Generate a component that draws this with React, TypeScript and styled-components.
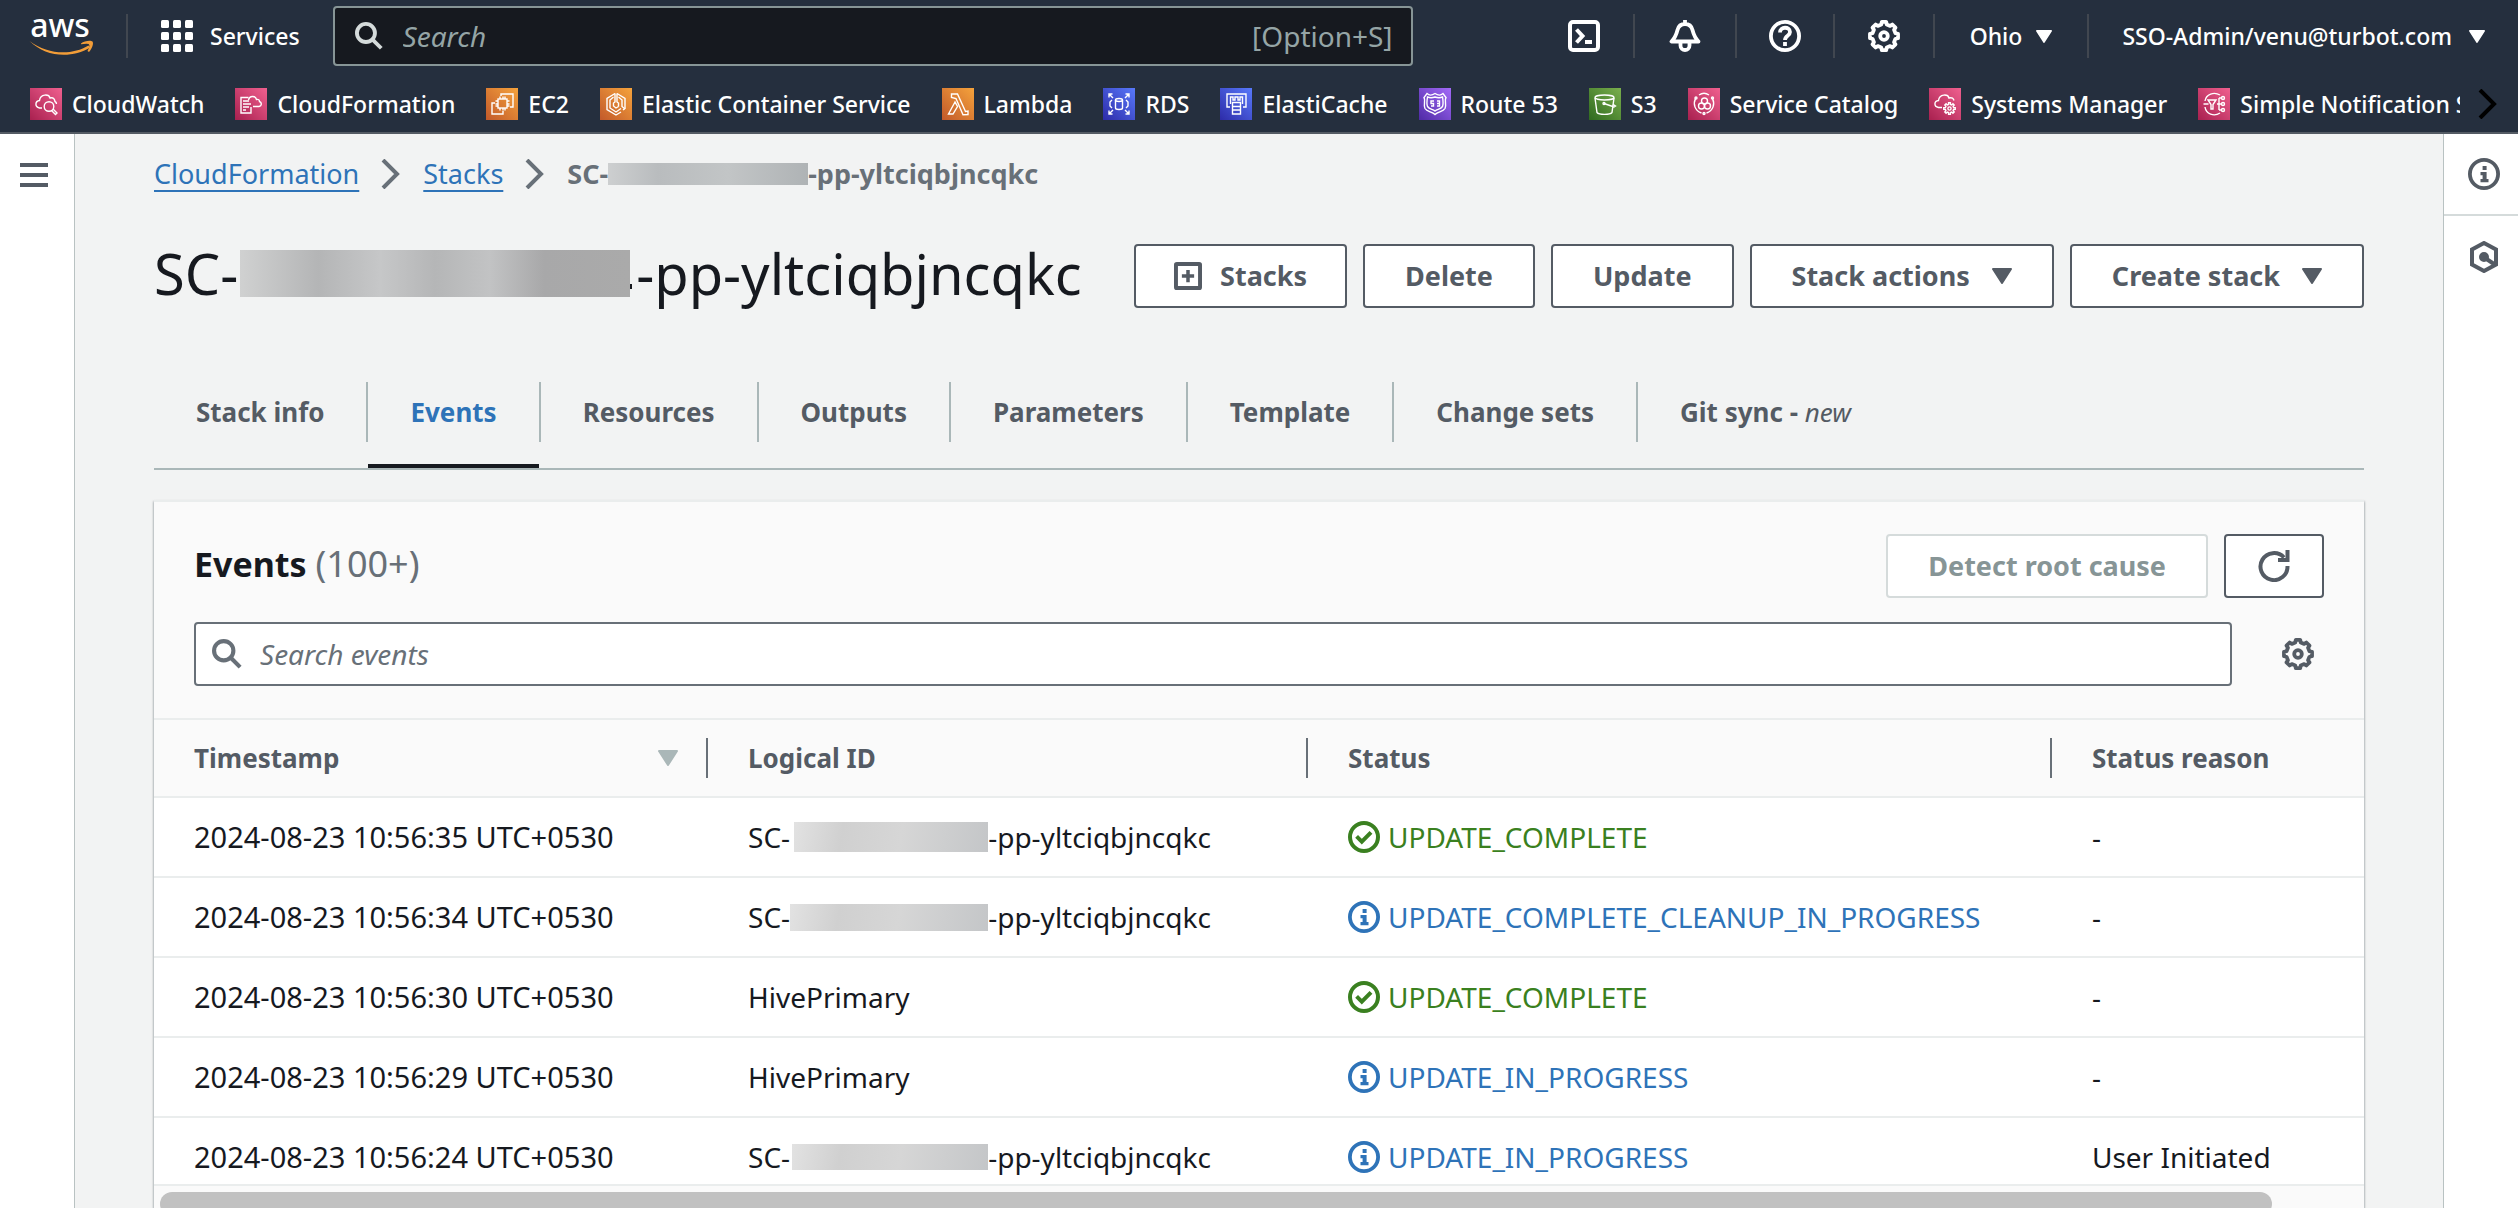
import React from "react";
import styled, { createGlobalStyle, css } from "styled-components";

const GlobalStyle = createGlobalStyle`
  *, *::before, *::after { box-sizing: border-box; }
  html, body { margin: 0; height: 100%; }
  body {
    background: #f2f3f3;
    color: #16191f;
    font-family: "Noto Sans", "Open Sans", sans-serif;
    font-size: 28px;
    line-height: 40px;
    overflow: hidden;
  }
  button, input { font: inherit; margin: 0; }
  button { cursor: pointer; }
  svg { display: block; flex: none; }
`;

/* ---------- Page frame ---------- */

const Page = styled.div`
  display: flex;
  flex-direction: column;
  height: 100vh;
`;

const Body = styled.div`
  display: flex;
  flex: 1;
  min-height: 0;
`;

const Rail = styled.nav<{ $side: "left" | "right" }>`
  flex: none;
  display: flex;
  flex-direction: column;
  width: 75px;
  background: #fff;
  ${(p) => (p.$side === "left" ? "border-right" : "border-left")}: 1px solid #b9c2c2;
`;

const RailButton = styled.button<{ $divided?: boolean; $inset: number }>`
  display: flex;
  align-items: center;
  height: 82px;
  padding: 0 0 0 ${(p) => p.$inset}px;
  border: 0;
  background: none;
  color: #545b64;
  ${(p) => p.$divided && css`border-bottom: 2px solid #d5dbdb;`}
`;

const Main = styled.main`
  flex: 1;
  min-width: 0;
  display: flex;
  flex-direction: column;
  padding: 20px 79px 0;
`;

/* ---------- Global header ---------- */

const Header = styled.header`
  flex: none;
  background: #252f3e;
  border-bottom: 2px solid #545b64;
  color: #fff;
  font-size: 23px;
  font-weight: 500;
  line-height: 32px;
`;

const TopRow = styled.div`
  display: flex;
  align-items: center;
  height: 72px;
`;

const Rule = styled.span`
  flex: none;
  width: 2px;
  height: 44px;
  background: #414750;
`;

const LogoLink = styled.a`
  flex: none;
  width: 126px;
  padding-left: 28px;
`;

const BarButton = styled.button<{ $pad: number; $gap?: number }>`
  flex: none;
  display: flex;
  align-items: center;
  gap: ${(p) => p.$gap ?? 14}px;
  padding: 0 ${(p) => p.$pad}px;
  border: 0;
  background: none;
  color: #fff;
  white-space: nowrap;
`;

const GlobalSearch = styled.label`
  display: flex;
  align-items: center;
  gap: 20px;
  flex: 0 1 1080px;
  height: 60px;
  padding: 0 18px 0 20px;
  border: 2px solid #879596;
  border-radius: 4px;
  background: #16191f;
  color: #95a5a6;
  font-size: 28px;
  font-weight: 400;
  svg { color: #d5dbdb; }
`;

const BareInput = styled.input`
  flex: 1;
  min-width: 0;
  height: 100%;
  padding: 0;
  border: 0;
  outline: 0;
  background: none;
  color: inherit;
  &::placeholder { color: inherit; font-style: italic; opacity: 1; }
`;

const TopRight = styled.div`
  display: flex;
  align-items: center;
  margin-left: auto;
`;

const FavoriteBar = styled.div`
  display: flex;
  align-items: center;
  height: 60px;
  padding: 4px 20px 0 30px;
  gap: 18px;
`;

const FavoriteList = styled.ul`
  display: flex;
  flex: 1;
  min-width: 0;
  gap: 31px;
  margin: 0;
  padding: 0;
  overflow: hidden;
  list-style: none;
`;

const FavoriteLink = styled.a`
  display: flex;
  align-items: center;
  gap: 10px;
  color: #fff;
  text-decoration: none;
  white-space: nowrap;
`;

const Tile = styled.span<{ $from: string; $to: string }>`
  flex: none;
  width: 32px;
  height: 32px;
  background: linear-gradient(45deg, ${(p) => p.$from}, ${(p) => p.$to});
  color: #fff;
`;

const ScrollButton = styled.button`
  flex: none;
  padding: 0;
  border: 0;
  background: none;
  color: #000;
`;

/* ---------- Stack heading ---------- */

const Crumbs = styled.ol`
  display: flex;
  align-items: center;
  gap: 22px;
  margin: 0;
  padding: 0;
  list-style: none;
  color: #687078;
  font-size: 27px;
`;

const Crumb = styled.li<{ $current?: boolean }>`
  display: flex;
  align-items: center;
  gap: 22px;
  font-weight: ${(p) => (p.$current ? 700 : 400)};
`;

const CrumbLink = styled.a`
  color: #2e73b8;
  text-decoration: underline;
  text-decoration-thickness: 2px;
  text-underline-offset: 6px;
  text-decoration-skip-ink: none;
`;

const Masked = styled.span`
  display: inline-flex;
  align-items: center;
  white-space: nowrap;
`;

const Mask = styled.span<{ $w: number; $h: number; $lead: number; $tone: "light" | "mid" | "dark" }>`
  flex: none;
  width: ${(p) => p.$w}px;
  height: ${(p) => p.$h}px;
  margin-left: ${(p) => p.$lead}px;
  background: ${(p) =>
    p.$tone === "light"
      ? "linear-gradient(100deg, #e2e2e2, #d0d0d0 25%, #d6d6d6 55%, #c4c6c8)"
      : p.$tone === "mid"
        ? "linear-gradient(90deg, #cdcfd0, #b9bcbe 25%, #c2c5c6 60%, #afb3b5)"
        : "linear-gradient(90deg, #d0d1d1, #b4b5b6 20%, #c6c7c8 36%, #b5b6b7 50%, #c2c3c4 64%, #a8a8a9 78%, #aaa)"};
`;

/* The foot of the last hidden letter, which shows past the mask. */
const Peek = styled.span`
  align-self: flex-end;
  width: 2px;
  height: 5px;
  margin: 0 4px 13px 0;
  background: #16191f;
`;

const TitleRow = styled.div`
  display: flex;
  align-items: center;
  justify-content: space-between;
  margin-top: 50px;
`;

const Title = styled.h1`
  margin: 0;
  padding-bottom: 6px;
  font-size: 56px;
  font-weight: 400;
  line-height: 58px;
`;

const Actions = styled.div`
  display: flex;
  gap: 16px;
`;

const Button = styled.button<{ $pad?: number; $gap?: number }>`
  display: flex;
  align-items: center;
  gap: ${(p) => p.$gap ?? 22}px;
  height: 64px;
  padding: 0 ${(p) => p.$pad ?? 40}px;
  border: 2px solid #545b64;
  border-radius: 4px;
  background: #fff;
  color: #545b64;
  font-size: 27px;
  font-weight: 700;
  white-space: nowrap;
  &:disabled { border-color: #d5dbdb; color: #879596; }
`;

const TabList = styled.div`
  display: flex;
  margin-top: 74px;
  border-bottom: 2px solid #aab7b8;
`;

const Tab = styled.button<{ $active?: boolean }>`
  height: 86px;
  padding: 0 42px 22px;
  border: 0;
  border-bottom: 4px solid ${(p) => (p.$active ? "#16191f" : "transparent")};
  background: none;
  color: ${(p) => (p.$active ? "#2e73b8" : "#545b64")};
  font-size: 26px;
  font-weight: 700;
  white-space: nowrap;
  em { font-weight: 400; }
`;

const TabRule = styled.span`
  width: 2px;
  height: 60px;
  background: #aab7b8;
`;

/* ---------- Events card ---------- */

const Card = styled.section`
  flex: 1;
  min-height: 0;
  display: flex;
  flex-direction: column;
  margin-top: 30px;
  border-top: 2px solid #eaeded;
  background: #fafafa;
  box-shadow: 0 2px 2px rgba(0, 28, 36, 0.3), 1px 1px 2px rgba(0, 28, 36, 0.15), -1px 1px 2px rgba(0, 28, 36, 0.15);
`;

const CardHead = styled.div`
  display: flex;
  align-items: center;
  gap: 16px;
  padding: 32px 40px 24px;
`;

const CardTitle = styled.h2`
  flex: 1;
  margin: 0;
  padding-bottom: 4px;
  font-size: 34px;
  font-weight: 700;
  line-height: 44px;
  span { color: #687078; font-size: 36px; font-weight: 400; }
`;

const FilterRow = styled.div`
  display: flex;
  align-items: center;
  gap: 50px;
  padding: 0 50px 32px 40px;
`;

const EventSearch = styled.label`
  display: flex;
  flex: 1;
  align-items: center;
  gap: 18px;
  height: 64px;
  padding: 0 16px;
  border: 2px solid #687078;
  border-radius: 4px;
  background: #fff;
  color: #687078;
`;

const IconButton = styled.button`
  flex: none;
  padding: 0;
  border: 0;
  background: none;
  color: #545b64;
`;

const TableView = styled.div`
  flex: 1;
  min-height: 0;
  overflow: hidden;
  background: #fff;
  border-bottom: 2px solid #eaeded;
`;

const Table = styled.table`
  width: 100%;
  table-layout: fixed;
  border-collapse: separate;
  border-spacing: 0;
  text-align: left;
`;

const HeadCell = styled.th`
  height: 80px;
  padding: 0;
  border-top: 2px solid #eaeded;
  border-bottom: 2px solid #eaeded;
  background: #fafafa;
  color: #545b64;
  font-size: 26px;
  font-weight: 700;
`;

const HeadInner = styled.div<{ $last?: boolean }>`
  display: flex;
  align-items: center;
  justify-content: space-between;
  height: 40px;
  padding: 0 28px 0 40px;
  border-right: ${(p) => (p.$last ? "0" : "2px solid #687078")};
`;

const Cell = styled.td<{ $stamp?: boolean }>`
  height: 80px;
  padding: 0 0 0 40px;
  border-bottom: 2px solid #eaeded;
  font-size: ${(p) => (p.$stamp ? 29 : 28)}px;
  white-space: nowrap;
`;

const Status = styled.span<{ $done: boolean }>`
  display: flex;
  align-items: center;
  gap: 8px;
  color: ${(p) => (p.$done ? "#3a8020" : "#2e73b8")};
`;

const ScrollTrack = styled.div`
  flex: none;
  height: 22px;
  padding: 6px 92px 0 6px;
  overflow: hidden;
`;

const ScrollThumb = styled.div`
  height: 24px;
  border-radius: 12px;
  background: #c1c1c1;
`;

/* ---------- Icons ---------- */

const Svg = ({ size = 32, children, w = 3 }: { size?: number; w?: number; children: React.ReactNode }) => (
  <svg width={size} height={size} viewBox="0 0 32 32" fill="none" stroke="currentColor" strokeWidth={w} aria-hidden="true">
    {children}
  </svg>
);

const gearPath = (cx: number, cy: number, outer: number, inner: number, teeth = 8) => {
  const pts: string[] = [];
  const step = (Math.PI * 2) / teeth;
  for (let i = 0; i < teeth; i++) {
    const a = i * step - Math.PI / 2;
    [
      [-0.3, inner],
      [-0.2, outer],
      [0.2, outer],
      [0.3, inner],
    ].forEach(([o, r]) => {
      pts.push(`${(cx + Math.cos(a + o * step) * r).toFixed(2)} ${(cy + Math.sin(a + o * step) * r).toFixed(2)}`);
    });
  }
  return `M${pts.join("L")}Z`;
};

const GearIcon = () => (
  <Svg w={3.8}>
    <path d={gearPath(16, 16, 14.2, 11.8)} strokeLinejoin="round" />
    <circle cx="16" cy="16" r="3.8" />
  </Svg>
);

const SearchIcon = ({ size = 28 }: { size?: number }) => (
  <Svg size={size} w={4.4}>
    <circle cx="12.5" cy="12.5" r="10.3" />
    <path d="M19.5 19.5l10.500 10.500" />
  </Svg>
);

const Caret = ({ w = 20, h = 16, color = "currentColor" }: { w?: number; h?: number; color?: string }) => (
  <svg width={w} height={h} viewBox="0 0 20 16" aria-hidden="true">
    <path d="M1 1h18l-9 14z" fill={color} stroke={color} strokeWidth="2" strokeLinejoin="round" />
  </svg>
);

const Chevron = ({ w = 20, h = 30 }: { w?: number; h?: number }) => (
  <svg width={w} height={h} viewBox="0 0 20 30" fill="none" stroke="currentColor" strokeWidth="4" aria-hidden="true">
    <path d="M2 1l14 14L2 29" />
  </svg>
);

const InfoIcon = () => (
  <Svg w={3.8}>
    <circle cx="16" cy="16" r="14.1" />
    <path d="M14.6 8h4v4h-4zM12.500 14h6.100v7H20.500v3.200h-8v-3.200h2.100v-3.800h-2.100z" fill="currentColor" stroke="none" />
  </Svg>
);

const DoneIcon = () => (
  <Svg w={4}>
    <circle cx="16" cy="16" r="14" />
    <path d="M8.6 15.4l5.2 5.2 9.2-9.2" />
  </Svg>
);

const AwsLogo = () => (
  <svg width="68" height="72" viewBox="0 0 68 72" aria-label="aws">
    <text x="32" y="37" textAnchor="middle" fill="#fff" fontFamily="Noto Sans, sans-serif" fontSize="32" fontWeight="500">
      aws
    </text>
    <g transform="translate(0 13)" fill="#f29d38">
      <path d="M1.500 28C20 42 44 42.500 60.500 32.500l1.500 2C44 45.500 18 44.500 1.500 28z" />
      <path d="M53 30.500c3-2.500 9.500-3.500 11.500-2 1.500 2-.5 7-3.500 10.500l-1.500-1c1.500-2.500 2.500-5.500 1.500-6.500-1-1-4.500-.6-8-.2z" />
    </g>
  </svg>
);

const pink = ["#a8204f", "#f0608f"];
const orange = ["#c2592a", "#f5a33c"];
const blue = ["#2d2ba8", "#5879fb"];
const purple = ["#4f2aa5", "#a36af8"];
const green = ["#2f6a1f", "#7aaf4d"];

const favorites: { name: string; tone: string[]; glyph: React.ReactNode }[] = [
  {
    name: "CloudWatch",
    tone: pink,
    glyph: (
      <>
        <path d="M12 20H9.500c-5-1-4.500-7 0-7.500 1-7 9.500-6.500 10.500-2.500 3.500-1 4.500 1 5 3.500 1 .5 1.500 1.500 1.500 2.500" />
        <circle cx="19" cy="18.500" r="4.800" />
        <path d="M21.500 22.500l4 4 1.500-1.500-4-4" />
      </>
    ),
  },
  {
    name: "CloudFormation",
    tone: pink,
    glyph: (
      <>
        <path d="M13.500 9.500H6v15.500h10V19M8 13h6M8 16h8M8 19h6M8 22h3" />
        <path d="M13.500 12c1-4.500 7-4.500 8-.5 2-.5 3 .5 3 2 2.500 1 2.500 4.500-.5 5h-6" />
      </>
    ),
  },
  {
    name: "EC2",
    tone: orange,
    glyph: (
      <>
        <rect x="12" y="11" width="9" height="9" />
        <path d="M14 8.500V11m3-2.500V11m2-2.500V11M14 20v2.500m3-2.500v2.500m2-2.500v2.500M9.500 13H12m-2.500 3H12m-2.500 2H12m9-5h2.500M21 16h2.500M21 18h2.500" />
        <path d="M15 8V6h12v13h-3M9 15H6v11h11v-3" />
      </>
    ),
  },
  {
    name: "Elastic Container Service",
    tone: orange,
    glyph: (
      <>
        <path d="M15 5.500l-8 5v11l9 5.500 5-3M17 5.500l8 5v10l-2 1.500" />
        <path d="M13.500 9l-3.500 3v8l6 4 5-3.500M18.500 9l3.500 3v6.500l3 2.500M15 5.500V14l-1.500 1v3l2.500 2 2.500-1.500M17 5.500V14l1.500 1v3.500" />
      </>
    ),
  },
  {
    name: "Lambda",
    tone: orange,
    glyph: <path d="M9.500 6h6l8 17.500 2.500-.5v3.500l-5 .3L14 10.500 9.500 9.500zM13 14L6.500 26H11l4.500-7.500z" />,
  },
  {
    name: "RDS",
    tone: blue,
    glyph: (
      <>
        <ellipse cx="16" cy="12" rx="3.500" ry="1.500" />
        <path d="M12.500 12v8c0 2 7 2 7 0v-8M6 9.500V6h3.500M6 6l4 4M22.500 6H26v3.500M26 6l-4 4M6 22.500V26h3.500M6 26l4-4M22.500 26H26v-3.500M26 26l-4-4M9 12l-2 2v4l2 2M23 12l2 2v4l-2 2" />
      </>
    ),
  },
  {
    name: "ElastiCache",
    tone: blue,
    glyph: (
      <>
        <path d="M10 19H7V6h19v13h-3" />
        <path d="M10.500 16V9h2.500v3h2V9h3v3h2V9h2.500v7" />
        <path d="M12.500 14.500h8V26h-8zM12.500 18.500h8M12.500 22h8" />
      </>
    ),
  },
  {
    name: "Route 53",
    tone: purple,
    glyph: (
      <>
        <path d="M16 5.500c-3 2-6 2-8 0l-3 4c2 3-1 7 1 11 2 3.500 7 3 10 6 3-3 8-2.500 10-6 2-4-1-8 1-11l-3-4c-2 2-5 2-8 0z" />
        <path d="M16 9c-3 1-5 1-7.500 0-.5 3-1 7 0 9.500 2 3 5 2.500 7.500 4.500 2.500-2 5.500-1.500 7.500-4.500 1-2.500.5-6.500 0-9.500-2.500 1-4.500 1-7.500 0z" />
        <path d="M15 13h-3v2.500h2.500V18H12M18 13h2.500v5H18m0-2.500h2.500" />
      </>
    ),
  },
  {
    name: "S3",
    tone: green,
    glyph: (
      <>
        <ellipse cx="15.500" cy="9.500" rx="9.500" ry="2.500" />
        <path d="M6 10l2 14.500c2 2.500 13 2.500 15 0L25 10M15 15.500l10 3.500 1.500-1-3-2" />
        <circle cx="15" cy="15.500" r="1" />
      </>
    ),
  },
  {
    name: "Service Catalog",
    tone: pink,
    glyph: (
      <>
        <path d="M7.500 10.500c-2.500 5.500-1 12 6 14.500M24.500 10.500c2.500 5.500 1 12-6 14.500M11 7c3-2 7-2 10 0" />
        <circle cx="16.500" cy="13" r="3" />
        <circle cx="13.500" cy="18" r="3" />
        <circle cx="19.500" cy="18" r="3" />
        <circle cx="8" cy="10" r="1" />
        <circle cx="24.500" cy="10" r="1" />
        <circle cx="16" cy="25.500" r="1" />
      </>
    ),
  },
  {
    name: "Systems Manager",
    tone: pink,
    glyph: (
      <>
        <path d="M13 19.500H9.500c-5-1-4.500-6.500 0-7 1-7 9.500-6.500 10.500-2.500 3-1 4.500 .5 5 2.500" />
        <path d={gearPath(20.5, 20.5, 5.8, 4.2)} />
        <circle cx="20.500" cy="20.500" r="1.600" />
      </>
    ),
  },
  {
    name: "Simple Notification Service",
    tone: pink,
    glyph: (
      <>
        <path d="M22 7c-6-3.500-14-1-15 6M7 19c1 7 9 10 15 6M5.500 16h5" />
        <path d="M10 12h8l-3 4.500V21h-2v-4.500zM19 16h5M21 10v12M21 10h3M21 22h3" />
        <circle cx="25" cy="10" r="1.500" />
        <circle cx="25" cy="16" r="1.500" />
        <circle cx="25" cy="22" r="1.500" />
      </>
    ),
  },
];

/* ---------- Data ---------- */

const tabs = ["Stack info", "Events", "Resources", "Outputs", "Parameters", "Template", "Change sets", "Git sync"];

type MaskShape = { w: number; h: number; lead?: number };
type Event = { time: string; id?: string; mask?: MaskShape; status: string; reason: string };

const events: Event[] = [
  { time: "10:56:35", mask: { w: 194, h: 30, lead: 4 }, status: "UPDATE_COMPLETE", reason: "-" },
  { time: "10:56:34", mask: { w: 198, h: 27 }, status: "UPDATE_COMPLETE_CLEANUP_IN_PROGRESS", reason: "-" },
  { time: "10:56:30", id: "HivePrimary", status: "UPDATE_COMPLETE", reason: "-" },
  { time: "10:56:29", id: "HivePrimary", status: "UPDATE_IN_PROGRESS", reason: "-" },
  { time: "10:56:24", mask: { w: 196, h: 26, lead: 2 }, status: "UPDATE_IN_PROGRESS", reason: "User Initiated" },
];

const MaskedName = ({ mask, tone, peek }: { mask: MaskShape; tone: "light" | "mid" | "dark"; peek?: boolean }) => (
  <Masked>
    SC-
    <Mask $w={mask.w} $h={mask.h} $lead={mask.lead ?? 0} $tone={tone} />
    {peek && <Peek />}
    -pp-yltciqbjncqkc
  </Masked>
);

export default function App() {
  return (
    <Page>
      <GlobalStyle />
      <Header>
        <TopRow>
          <LogoLink href="#home" aria-label="AWS home">
            <AwsLogo />
          </LogoLink>
          <Rule />
          <BarButton $pad={33} $gap={17}>
            <svg width="32" height="32" viewBox="0 0 32 32" fill="currentColor" aria-hidden="true">
              {[0, 12, 24].map((y) => [0, 12, 24].map((x) => <rect key={`${x}-${y}`} x={x} y={y} width="8" height="8" rx="1.500" />))}
            </svg>
            Services
          </BarButton>
          <GlobalSearch>
            <SearchIcon />
            <BareInput type="text" placeholder="Search" aria-label="Search" />
            <span>[Option+S]</span>
          </GlobalSearch>
          <TopRight>
            <BarButton $pad={33} aria-label="CloudShell">
              <Svg w={4}>
                <rect x="2" y="2" width="28" height="28" rx="3" />
                <path d="M8.500 9.500l6 6.500-6 6.500" />
                <path d="M17 22h7" />
              </Svg>
            </BarButton>
            <Rule />
            <BarButton $pad={34} aria-label="Notifications">
              <Svg w={3.8}>
                <path d="M16 0v4M2.500 21.500h27C25.500 17.500 24.500 14 23.500 10 22.500 6 19.500 4 16 4s-6.500 2-7.500 6C7.500 14 6.500 17.500 2.500 21.500z" strokeLinejoin="round" />
                <path d="M11.500 23v2.500c0 6 9 6 9 0V23" />
              </Svg>
            </BarButton>
            <Rule />
            <BarButton $pad={32} aria-label="Help">
              <Svg w={3.8}>
                <circle cx="16" cy="16" r="14.100" />
                <path d="M11 12.500c0-6.500 10-6 10-.500 0 4-5 3.500-5 8M16 22v4" />
              </Svg>
            </BarButton>
            <Rule />
            <BarButton $pad={33} aria-label="Settings">
              <GearIcon />
            </BarButton>
            <Rule />
            <BarButton $pad={35}>
              Ohio
              <Caret w={16} h={13} />
            </BarButton>
            <Rule />
            <BarButton $pad={33} $gap={17}>
              SSO-Admin/venu@turbot.com
              <Caret w={16} h={13} />
            </BarButton>
          </TopRight>
        </TopRow>
        <FavoriteBar>
          <FavoriteList>
            {favorites.map((f) => (
              <li key={f.name}>
                <FavoriteLink href={`#${f.name}`}>
                  <Tile $from={f.tone[0]} $to={f.tone[1]}>
                    <Svg w={1.4}>{f.glyph}</Svg>
                  </Tile>
                  {f.name}
                </FavoriteLink>
              </li>
            ))}
          </FavoriteList>
          <ScrollButton aria-label="Scroll right">
            <Chevron />
          </ScrollButton>
        </FavoriteBar>
      </Header>

      <Body>
        <Rail $side="left" aria-label="Navigation">
          <RailButton $inset={20} aria-label="Open navigation">
            <svg width="28" height="24" viewBox="0 0 28 24" fill="currentColor" aria-hidden="true">
              <path d="M0 0h28v4H0zM0 10h28v4H0zM0 20h28v4H0z" />
            </svg>
          </RailButton>
        </Rail>

        <Main>
          <nav aria-label="Breadcrumbs">
            <Crumbs>
              <Crumb>
                <CrumbLink href="#cloudformation">CloudFormation</CrumbLink>
                <Chevron />
              </Crumb>
              <Crumb>
                <CrumbLink href="#stacks">Stacks</CrumbLink>
                <Chevron />
              </Crumb>
              <Crumb $current>
                <MaskedName mask={{ w: 200, h: 22 }} tone="mid" />
              </Crumb>
            </Crumbs>
          </nav>

          <TitleRow>
            <Title>
              <MaskedName mask={{ w: 390, h: 47, lead: 2 }} tone="dark" peek />
            </Title>
            <Actions>
              <Button $pad={38} $gap={18}>
                <Svg size={28} w={4.5}>
                  <rect x="2.250" y="2.250" width="27.500" height="27.500" rx="1" />
                  <path d="M16 9v14M9 16h14" strokeWidth="4" />
                </Svg>
                Stacks
              </Button>
              <Button>Delete</Button>
              <Button>Update</Button>
              <Button>
                Stack actions
                <Caret />
              </Button>
              <Button>
                Create stack
                <Caret />
              </Button>
            </Actions>
          </TitleRow>

          <TabList role="tablist">
            {tabs.map((t, i) => (
              <React.Fragment key={t}>
                {i > 0 && <TabRule />}
                <Tab role="tab" aria-selected={t === "Events"} $active={t === "Events"}>
                  {t}
                  {t === "Git sync" && (
                    <>
                      {" - "}
                      <em>new</em>
                    </>
                  )}
                </Tab>
              </React.Fragment>
            ))}
          </TabList>

          <Card>
            <CardHead>
              <CardTitle>
                Events <span>(100+)</span>
              </CardTitle>
              <Button disabled>Detect root cause</Button>
              <Button $pad={32} aria-label="Refresh">
                <Svg w={4}>
                  <path d="M29.500 16A13.500 13.500 0 1 1 26 7.500" />
                  <path d="M29.500 0v10H20" />
                </Svg>
              </Button>
            </CardHead>
            <FilterRow>
              <EventSearch>
                <SearchIcon size={30} />
                <BareInput type="text" placeholder="Search events" aria-label="Search events" />
              </EventSearch>
              <IconButton aria-label="Preferences">
                <GearIcon />
              </IconButton>
            </FilterRow>
            <TableView>
              <Table>
                <colgroup>
                  <col style={{ width: "25.07%" }} />
                  <col style={{ width: "27.15%" }} />
                  <col style={{ width: "33.66%" }} />
                  <col />
                </colgroup>
                <thead>
                  <tr>
                    <HeadCell scope="col">
                      <HeadInner>
                        Timestamp
                        <Caret color="#aab7b8" />
                      </HeadInner>
                    </HeadCell>
                    <HeadCell scope="col">
                      <HeadInner>Logical ID</HeadInner>
                    </HeadCell>
                    <HeadCell scope="col">
                      <HeadInner>Status</HeadInner>
                    </HeadCell>
                    <HeadCell scope="col">
                      <HeadInner $last>Status reason</HeadInner>
                    </HeadCell>
                  </tr>
                </thead>
                <tbody>
                  {events.map((e) => {
                    const done = e.status === "UPDATE_COMPLETE";
                    return (
                      <tr key={e.time}>
                        <Cell $stamp>2024-08-23 {e.time} UTC+0530</Cell>
                        <Cell>{e.mask ? <MaskedName mask={e.mask} tone="light" /> : e.id}</Cell>
                        <Cell>
                          <Status $done={done}>
                            {done ? <DoneIcon /> : <InfoIcon />}
                            {e.status}
                          </Status>
                        </Cell>
                        <Cell>{e.reason}</Cell>
                      </tr>
                    );
                  })}
                </tbody>
              </Table>
            </TableView>
            <ScrollTrack>
              <ScrollThumb />
            </ScrollTrack>
          </Card>
        </Main>

        <Rail $side="right" aria-label="Help panels">
          <RailButton $inset={24} $divided aria-label="Info">
            <InfoIcon />
          </RailButton>
          <RailButton $inset={24} aria-label="Resources">
            <Svg w={4}>
              <path d="M16 2l12 6.500v15L16 30 4 23.500v-15z" />
              <circle cx="16" cy="16" r="3" fill="currentColor" />
              <path d="M17 17l9 6" />
            </Svg>
          </RailButton>
        </Rail>
      </Body>
    </Page>
  );
}
